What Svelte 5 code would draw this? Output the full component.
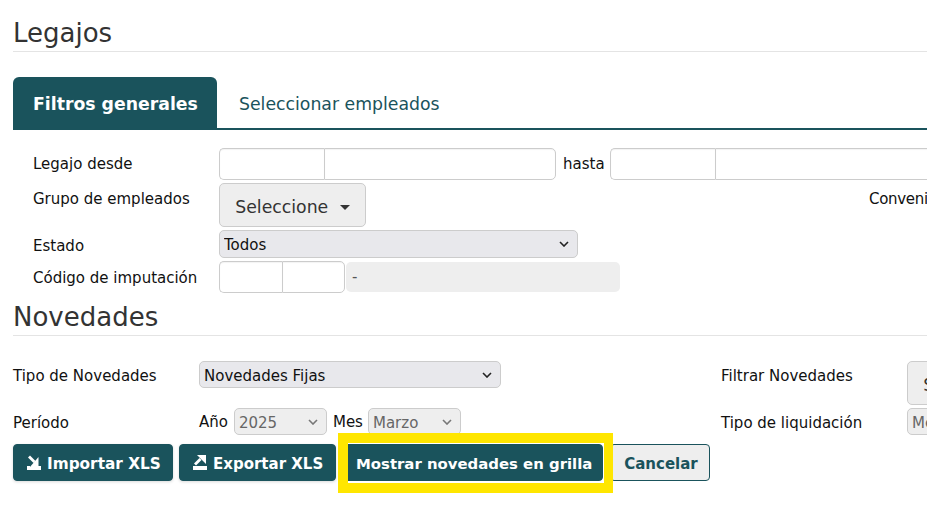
<script>
  // Chevron drawn on the selects, the native one is too big here
  const chevron = (color) =>
    `url("data:image/svg+xml,%3Csvg xmlns='http://www.w3.org/2000/svg' width='10' height='6'%3E%3Cpath d='M1 1l4 4 4-4' fill='none' stroke='${color}' stroke-width='1.6'/%3E%3C/svg%3E")`;
</script>

<div class="page" style="--chevron: {chevron('%23222')}; --chevron-off: {chevron('%23777')}">
  <h1>Legajos</h1>

  <div class="tabs">
    <div class="tab active">Filtros generales</div>
    <div class="tab">Seleccionar empleados</div>
  </div>

  <div class="filters">
    <label for="legajo-desde">Legajo desde</label>
    <div class="row">
      <div class="group">
        <input id="legajo-desde" class="code" />
        <input class="name" />
      </div>
      <span class="hasta">hasta</span>
      <div class="group">
        <input class="code" />
        <input class="name wide" />
      </div>
    </div>

    <span class="lbl top">Grupo de empleados</span>
    <div class="row split">
      <button class="dropdown">Seleccione <span class="caret"></span></button>
      <span class="convenio">Convenio</span>
    </div>

    <label for="estado">Estado</label>
    <select id="estado" class="select estado">
      <option>Todos</option>
    </select>

    <label for="imputacion" class="imputacion">Código de imputación</label>
    <div class="row">
      <div class="group small">
        <input id="imputacion" class="code" />
        <input class="name" />
      </div>
      <div class="readonly">-</div>
    </div>
  </div>

  <h1 class="second">Novedades</h1>

  <div class="novedades">
    <label for="tipo" class="mid">Tipo de Novedades</label>
    <select id="tipo" class="select tipo">
      <option>Novedades Fijas</option>
    </select>
    <span class="lbl mid">Filtrar Novedades</span>
    <button class="dropdown">Seleccione <span class="caret"></span></button>

    <span class="lbl period">Período</span>
    <div class="row periodo">
      <span>Año</span>
      <select class="select disabled year" disabled><option>2025</option></select>
      <span>Mes</span>
      <select class="select disabled month" disabled><option>Marzo</option></select>
    </div>
    <span class="lbl period">Tipo de liquidación</span>
    <select class="select disabled liquidacion" disabled><option>Mensual</option></select>
  </div>

  <div class="actions">
    <button class="btn primary import">
      <svg viewBox="0 0 14 15" width="14" height="15" aria-hidden="true">
        <path d="M0 11h3v1h8v-1h3v4H0z" fill="currentColor" />
        <path d="M2 1.5l5.5 5.5" stroke="currentColor" stroke-width="2.8" fill="none" />
        <path d="M11.5 2v10.5h-9z" fill="currentColor" />
      </svg>
      Importar XLS
    </button>
    <button class="btn primary export">
      <svg viewBox="0 0 14 15" width="14" height="15" aria-hidden="true">
        <path d="M0 11h14v4H0z" fill="currentColor" />
        <path d="M2 9.5l5.5-5.5" stroke="currentColor" stroke-width="2.8" fill="none" />
        <path d="M13 0v9L4 0z" fill="currentColor" />
      </svg>
      Exportar XLS
    </button>
    <div class="highlight">
      <button class="btn primary show">Mostrar novedades en grilla</button>
    </div>
    <button class="btn cancel">Cancelar</button>
  </div>
</div>

<style>
  :global(body) {
    overflow: hidden;
    background: #fff;
  }

  .page {
    width: 1400px;
    height: 517px;
    overflow: hidden;
    box-sizing: border-box;
    padding: 14px 0 0 13px;
    font-family: "DejaVu Sans", Verdana, sans-serif;
    font-size: 15px;
    color: #111;
  }

  h1 {
    margin: 0;
    height: 37px;
    font-size: 26px;
    font-weight: 400;
    line-height: 38px;
    color: #333;
    border-bottom: 1px solid #e4e4e4;
  }
  h1.second {
    margin-top: 5px;
  }

  /* Tabs */
  .tabs {
    display: flex;
    margin-top: 25px;
    height: 53px;
    box-sizing: border-box;
    border-bottom: 2px solid #1a535c;
  }
  .tab {
    padding: 0 22px;
    line-height: 54px;
    font-size: 17.3px;
    color: #1a535c;
    white-space: nowrap;
  }
  .tab.active {
    height: 53px;
    width: 204px;
    box-sizing: border-box;
    padding: 0 0 0 20px;
    background: #1a535c;
    color: #fff;
    font-weight: 700;
    border-radius: 6px 6px 0 0;
  }

  /* Filter form */
  .filters {
    display: grid;
    grid-template-columns: 186px 1fr;
    grid-template-rows: 32px 44px 28px 32px;
    row-gap: 3px;
    margin-top: 18px;
    padding-left: 20px;
    align-items: start;
  }
  label, .lbl {
    line-height: 20px;
    padding-top: 6px;
  }
  .imputacion {
    padding-top: 7px;
  }
  .row {
    display: flex;
    align-items: center;
  }
  .split {
    width: 1100px;
    align-items: flex-start;
  }
  .convenio {
    margin-left: 503px;
    letter-spacing: -0.3px;
    line-height: 20px;
    padding-top: 6px;
  }

  .group {
    display: flex;
    height: 32px;
  }
  .group input {
    box-sizing: border-box;
    height: 32px;
    margin: 0;
    padding: 0;
    border: 1px solid #ccc;
    background: #fff;
    box-shadow: inset 0 1px 1px rgba(0, 0, 0, 0.05);
    outline: none;
  }
  .code {
    width: 105px;
    border-radius: 5px 0 0 5px;
    border-right: none !important;
  }
  .name {
    width: 232px;
    border-radius: 0 5px 5px 0;
  }
  .name.wide {
    width: 420px;
  }
  .small .code {
    width: 63px;
  }
  .small .name {
    width: 63px;
  }
  .hasta {
    margin: 0 5px 0 7px;
  }

  .dropdown {
    box-sizing: border-box;
    width: 147px;
    height: 44px;
    padding: 3px 0 0;
    border: 1px solid #ccc;
    border-radius: 5px;
    background: #eee;
    color: #333;
    font-family: inherit;
    font-size: 17.3px;
  }
  .caret {
    display: inline-block;
    margin-left: 6px;
    vertical-align: 3px;
    border: 5px solid transparent;
    border-top-color: #333;
    border-bottom: none;
  }

  .select {
    appearance: none;
    box-sizing: border-box;
    height: 28px;
    margin: 0;
    padding: 2px 0 0 4px;
    border: 1px solid #ccc;
    border-radius: 5px;
    background: #e8e8ec var(--chevron) no-repeat right 8px center;
    color: #111;
    font-family: inherit;
    font-size: 15px;
  }
  .estado {
    width: 359px;
  }
  .readonly {
    box-sizing: border-box;
    width: 274px;
    height: 30px;
    margin-left: 1px;
    padding: 6px 0 0 6px;
    border-radius: 5px;
    background: #eee;
    color: #555;
    font-size: 15px;
  }

  /* Novedades form */
  .novedades {
    display: grid;
    grid-template-columns: 186px 522px 186px 1fr;
    grid-template-rows: 44px 27px;
    row-gap: 3px;
    margin-top: 25px;
    align-items: start;
  }
  .mid {
    padding-top: 5px;
  }
  .period {
    padding-top: 5px;
  }
  .tipo {
    width: 302px;
    height: 27px;
  }
  .periodo {
    gap: 6px;
  }
  .disabled {
    height: 27px;
    background-color: #eee;
    background-image: var(--chevron-off);
    color: #666;
    opacity: 1;
  }
  .year, .month {
    width: 93px;
  }
  .month {
    margin-left: -1px;
  }
  .liquidacion {
    width: 200px;
  }

  /* Action buttons */
  .actions {
    display: flex;
    align-items: flex-start;
    margin-top: 9px;
  }
  .btn {
    box-sizing: border-box;
    display: flex;
    align-items: center;
    gap: 6px;
    height: 37px;
    padding: 2px 13px 0;
    border: 1px solid #1a535c;
    border-radius: 4px;
    font-family: inherit;
    font-size: 15px;
    font-weight: 700;
    white-space: nowrap;
  }
  .btn svg {
    margin-top: -2px;
    flex: none;
  }
  .primary {
    background: #1a535c;
    color: #fff;
    box-shadow: 0 1px 3px rgba(0, 0, 0, 0.15);
  }
  .import {
    width: 160px;
    font-size: 15.3px;
  }
  .export {
    width: 157px;
    margin-left: 6px;
  }
  .show {
    width: 261px;
    font-size: 14.9px;
    box-shadow: 0 0 0 1px #fff, 0 2px 0 #fff;
  }
  .cancel {
    width: 100px;
    margin-left: 7px;
    background: #eee;
    color: #1a535c;
    justify-content: center;
    padding: 2px 0 0 2px;
  }

  /* Yellow annotation round the main button */
  .highlight {
    position: relative;
    margin-left: 6px;
  }
  .highlight::after {
    content: "";
    position: absolute;
    inset: -11px -10px -12px -4px;
    border: solid #ffe600;
    border-width: 10px 9px 10px 10px;
    pointer-events: none;
  }
</style>
